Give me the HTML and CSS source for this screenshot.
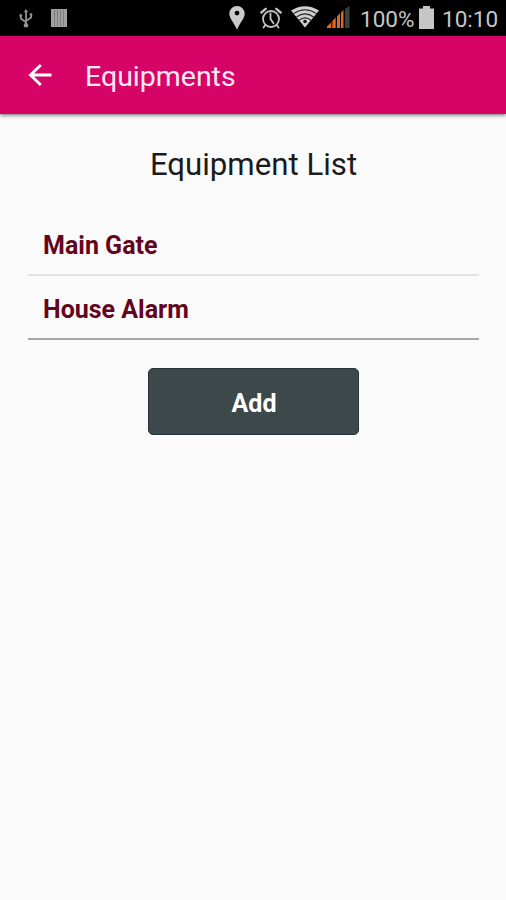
FILE: index.html
```html
<!DOCTYPE html>
<html lang="en">
<head>
<meta charset="utf-8">
<title>Equipments</title>
<link rel="stylesheet" href="styles.css">
</head>
<body>
<div class="status">
  <svg class="usb" width="14" height="20" viewBox="0 0 14 20" fill="none" stroke="#929292" stroke-width="1.800">
    <path d="M7 16V2M1.800 6v3.500L7 13.200M12.200 5v3.500L7 12"/>
    <path d="M7 0l2.200 3.200H4.800zM.5 5.200h2.600v2.300H.5zM10.800 4.200h2.400v2.300h-2.400z" fill="#929292" stroke="none"/>
    <circle cx="7" cy="16.200" r="2.300" fill="#929292" stroke="none"/>
  </svg>
  <svg class="bars" width="16" height="18" viewBox="0 0 16 18">
    <path fill="#a0a0a0" d="M0 0h16v18H0z"/>
    <path stroke="#7c7c7c" d="M3.500 1v16M6.500 1v16M9.500 1v16M12.500 1v16"/>
  </svg>
  <svg class="pin" width="16" height="24" viewBox="0 0 16 24">
    <path fill="#cbcbcb" fill-rule="evenodd" d="M8 0a7.700 7.700 0 0 0-7.700 7.700C.3 12.500 5.500 17 8 23.800 10.500 17 15.700 12.500 15.700 7.700A7.700 7.700 0 0 0 8 0zm0 4.700a2.400 2.400 0 1 1 0 4.800 2.400 2.400 0 0 1 0-4.800z"/>
  </svg>
  <svg class="alarm" width="22" height="22" viewBox="0 0 22 22" fill="none" stroke="#c4c4c4" stroke-width="1.800" stroke-linecap="round">
    <circle cx="11" cy="12" r="8"/>
    <path d="M10.500 6.500V12l3 4.200M5.300 18L3.500 20.500M16.700 18l1.800 2.500"/>
    <path stroke-width="2.300" d="M1.300 5.500L5.700 1.800M20.700 5.500L16.300 1.800"/>
  </svg>
  <svg class="wifi" width="28" height="22" viewBox="0 0 28 22">
    <path fill="#cfcfcf" d="M0 4.600Q14-4.200 28 4.600L14 21.500z"/>
    <path fill="none" stroke="#222" stroke-width="1.100" d="M2.500 7.600Q14 0 25.500 7.600M5.500 11Q14 4.800 22.500 11M8 14.300Q14 9.500 20 14.300"/>
    <circle cx="14" cy="15.500" r="1.800" fill="#111"/>
  </svg>
  <svg class="signal" width="23" height="22" viewBox="0 0 23 22">
    <path fill="#df681d" d="M0 22v-1.500l4.300-4.300V22zM5.300 22v-7l3.400-3.500V22zM10 22V10.500L13 7v15zM14 22V6.500L16.500 4v18z"/>
    <path fill="#3b403e" d="M18 22V3l4.500-3v22z"/>
  </svg>
  <span class="percent">100%</span>
  <svg class="battery" width="15" height="23" viewBox="0 0 15 23"><path fill="#c6c6c6" d="M4 0h7v2.500h4V23H0V2.500h4z"/></svg>
  <span class="clock">10:10</span>
</div>
<header class="toolbar">
  <svg class="back" width="24" height="24" viewBox="0 0 24 24" fill="none" stroke="#fff" stroke-width="2.900"><path d="M23.500 12H2.500M12.800 2L2.500 12l10.300 10"/></svg>
  <h1 class="title">Equipments</h1>
</header>
<main class="content">
  <h2 class="heading">Equipment List</h2>
  <ul class="list">
    <li class="row">Main Gate</li>
    <li class="row">House Alarm</li>
  </ul>
  <button class="add">Add</button>
</main>
</body>
</html>
```
FILE: styles.css
```css
* { box-sizing: border-box; }
body { margin: 0; height: 900px; background: #fafafa; font-family: Roboto, sans-serif; overflow: hidden; }
svg { display: block; flex: none; }
.status { height: 36px; background: #000; color: #c6c6c6; display: flex; align-items: flex-start; white-space: nowrap; }
.usb { margin: 9px 0 0 19px; }
.bars { margin: 9px 0 0 18px; }
.pin { margin: 6px 0 0 162px; }
.alarm { margin: 7px 0 0 15px; }
.wifi { margin: 6px 0 0 9px; }
.signal { margin: 6px 0 0 8px; }
.percent { width: 59px; margin-left: 10px; font-size: 22.5px; line-height: 38px; }
.battery { margin-top: 6px; }
.clock { margin-left: 8px; font-size: 22.5px; line-height: 38px; }
.toolbar { height: 78px; background: #d60466; display: flex; align-items: center; padding-left: 28px; box-shadow: 0 1px 4px rgba(0,0,0,.6); }
.title { margin: 3px 0 0 33px; color: #ffe9f3; font-size: 28.5px; font-weight: 400; line-height: 36px; }
.content { display: flex; flex-direction: column; align-items: center; padding: 31px 27px 0 28px; }
.heading { margin: 0; font-size: 31.2px; font-weight: 400; line-height: 40px; color: #1b1b1b; }
.list { list-style: none; width: 451px; margin: 27px 0 0; padding: 0; }
.row { height: 64px; padding: 2px 0 0 15px; border-bottom: 2px solid #e2e2e2; color: #64041d; font-size: 25px; font-weight: 700; line-height: 64px; }
.row:last-child { border-color: #a6a6a6; }
.add { width: 211px; height: 67px; margin-top: 28px; padding: 3px 0 0 1px; border: 1px solid #24343a; border-radius: 5px; background: #3d484b; color: #fff; font: 700 25px Roboto, sans-serif; }
```
